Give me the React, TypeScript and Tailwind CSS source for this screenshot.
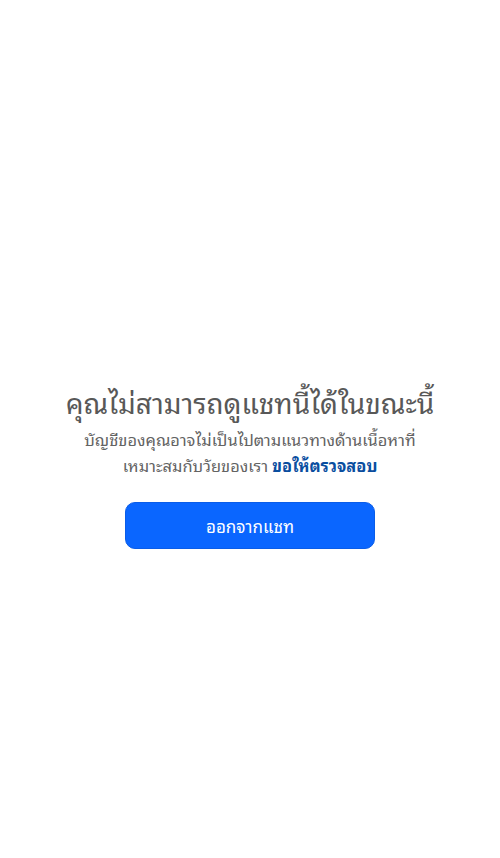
export default function App() {
	return (
		<main
			className="min-h-screen bg-white flex flex-col items-center text-center pt-[382px] px-4"
			style={{ fontFamily: '"Noto Sans Thai Looped", "Noto Sans", sans-serif' }}
		>
			<h1 className="text-[28px] leading-[40px] text-[#585858] font-normal whitespace-nowrap">
				คุณไม่สามารถดูแชทนี้ได้ในขณะนี้
			</h1>
			<p className="mt-[4px] text-[16.4px] leading-[26px] text-[#636363]">
				บัญชีของคุณอาจไม่เป็นไปตามแนวทางด้านเนื้อหาที่
				<br />
				เหมาะสมกับวัยของเรา <span className="font-bold text-[#0a4e9f]">ขอให้ตรวจสอบ</span>
			</p>
			<button className="mt-[24px] w-[250px] h-[47px] rounded-[10px] bg-[#0a66ff] text-white text-[17px] border border-[#0a5de8]">
				ออกจากแชท
			</button>
		</main>
	)
}
